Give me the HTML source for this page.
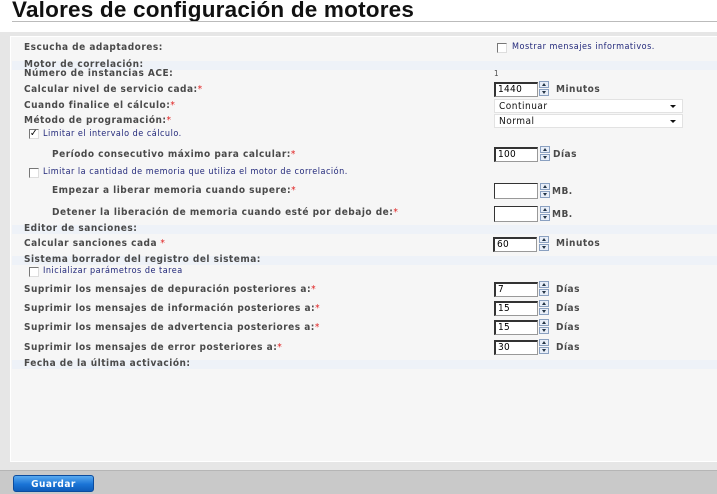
<!DOCTYPE html>
<html><head><meta charset="utf-8"><style>
*{margin:0;padding:0;box-sizing:border-box}
body{width:717px;height:494px;background:#fff;position:relative;overflow:hidden;font-family:Tahoma,"DejaVu Sans Condensed","Liberation Sans",sans-serif;font-size:10px;color:#4a4a4a;letter-spacing:0.5px}
.a{position:absolute;white-space:nowrap}
h1{position:absolute;left:12px;top:-3px;font:bold 22.5px "Liberation Sans",Arial,sans-serif;color:#111;letter-spacing:0.2px;white-space:nowrap}
.rule{position:absolute;left:12px;top:21px;width:705px;height:1px;background:#bbb}
.outer{position:absolute;left:0;top:32px;width:717px;height:440px;background:#e6e6e6}
.inner{position:absolute;left:10px;top:36px;width:707px;height:426px;background:#f6f6f6;border:1px solid #fff;border-right:none}
.foot{position:absolute;left:0;top:470px;width:717px;height:24px;background:#c9c9c9;border-top:1px solid #b5b5b5}
.btn{position:absolute;left:13px;top:475px;width:81px;height:17px;border-radius:3px;background:linear-gradient(#5aaaf0,#1a74d6 55%,#0e5cba);color:#fff;font-weight:bold;font-size:10px;text-align:center;line-height:17px;border:1px solid #0b4c9e}
b{font-weight:bold}
.r{color:#e02020}
.band{position:absolute;left:12px;width:705px;height:9px;background:#eef2f8}
.in{position:absolute;width:44px;height:15px;background:#fff;border:1px solid #999;border-top:2px solid #333;border-left:2px solid #333;font-size:10px;color:#000;padding-left:2px;line-height:12px;letter-spacing:0.3px}
.sp{position:absolute;width:10px;height:16px}
.sp i{display:block;width:10px;height:7px;border:1px solid #8aa0c0;background:#e8eef8;margin-bottom:1px;position:relative}
.sp i:after{content:"";position:absolute;left:2px;top:1px;border-left:2px solid transparent;border-right:2px solid transparent}
.sp i.u:after{border-bottom:3px solid #234}
.sp i.d:after{border-top:3px solid #234}
.sel{position:absolute;left:494px;width:189px;height:14px;background:#fff;border:1px solid #e2e2e2;font-size:10px;color:#111;padding-left:4px;line-height:13px}
.sel:after{content:"";position:absolute;right:6px;top:5px;border-left:3px solid transparent;border-right:3px solid transparent;border-top:3px solid #111}
.cb{position:absolute;width:10px;height:10px;border:1px solid #777;border-right-color:#ddd;border-bottom-color:#ddd;background:#fff}
.cl{color:#22287a;font-size:9px}
</style></head><body>
<h1>Valores de configuración de motores</h1>
<div class="rule"></div>
<div class="outer"></div>
<div class="inner"></div>
<div class="band" style="top:61px"></div>
<div class="band" style="top:225px"></div>
<div class="band" style="top:256px"></div>
<div class="band" style="top:360px"></div>

<div class="a" style="left:24px;top:42px"><b>Escucha de adaptadores:</b></div>
<div class="cb" style="left:497px;top:43px"></div>
<div class="a cl" style="left:512px;top:42px">Mostrar mensajes informativos.</div>

<div class="a" style="left:24px;top:59px"><b>Motor de correlación:</b></div>
<div class="a" style="left:24px;top:68px"><b>Número de instancias ACE:</b></div>
<div class="a" style="left:494px;top:69px;font-size:8px">1</div>

<div class="a" style="left:24px;top:84px"><b>Calcular nivel de servicio cada:</b><span class="r">*</span></div>
<div class="in" style="left:494px;top:82px">1440</div>
<div class="sp" style="left:539px;top:81px"><i class="u"></i><i class="d"></i></div>
<div class="a" style="left:556px;top:84px"><b>Minutos</b></div>

<div class="a" style="left:24px;top:100px"><b>Cuando finalice el cálculo:</b><span class="r">*</span></div>
<div class="sel" style="top:99px">Continuar</div>
<div class="a" style="left:24px;top:115px"><b>Método de programación:</b><span class="r">*</span></div>
<div class="sel" style="top:114px">Normal</div>

<div class="cb" style="left:29px;top:129px;font-size:10px;line-height:8px;color:#000;letter-spacing:0">✓</div>
<div class="a cl" style="left:43px;top:129px">Limitar el intervalo de cálculo.</div>

<div class="a" style="left:52px;top:149px"><b>Período consecutivo máximo para calcular:</b><span class="r">*</span></div>
<div class="in" style="left:494px;top:147px">100</div>
<div class="sp" style="left:540px;top:146px"><i class="u"></i><i class="d"></i></div>
<div class="a" style="left:553px;top:149px"><b>Días</b></div>

<div class="cb" style="left:29px;top:168px"></div>
<div class="a cl" style="left:43px;top:167px">Limitar la cantidad de memoria que utiliza el motor de correlación.</div>

<div class="a" style="left:52px;top:185px"><b>Empezar a liberar memoria cuando supere:</b><span class="r">*</span></div>
<div class="in" style="left:494px;top:183px;border-top-width:1px;border-left-width:1px;height:16px"></div>
<div class="sp" style="left:540px;top:183px"><i class="u"></i><i class="d"></i></div>
<div class="a" style="left:552px;top:186px"><b>MB.</b></div>

<div class="a" style="left:52px;top:207px"><b>Detener la liberación de memoria cuando esté por debajo de:</b><span class="r">*</span></div>
<div class="in" style="left:494px;top:206px;border-top-width:1px;border-left-width:1px;height:16px"></div>
<div class="sp" style="left:540px;top:206px"><i class="u"></i><i class="d"></i></div>
<div class="a" style="left:552px;top:209px"><b>MB.</b></div>

<div class="a" style="left:24px;top:223px"><b>Editor de sanciones:</b></div>
<div class="a" style="left:24px;top:238px"><b>Calcular sanciones cada</b> <span class="r">*</span></div>
<div class="in" style="left:493px;top:237px">60</div>
<div class="sp" style="left:539px;top:236px"><i class="u"></i><i class="d"></i></div>
<div class="a" style="left:556px;top:238px"><b>Minutos</b></div>

<div class="a" style="left:24px;top:254px"><b>Sistema borrador del registro del sistema:</b></div>
<div class="cb" style="left:29px;top:267px"></div>
<div class="a cl" style="left:43px;top:266px">Inicializar parámetros de tarea</div>

<div class="a" style="left:24px;top:284px"><b>Suprimir los mensajes de depuración posteriores a:</b><span class="r">*</span></div>
<div class="in" style="left:494px;top:282px">7</div>
<div class="sp" style="left:539px;top:281px"><i class="u"></i><i class="d"></i></div>
<div class="a" style="left:556px;top:284px"><b>Días</b></div>

<div class="a" style="left:24px;top:303px"><b>Suprimir los mensajes de información posteriores a:</b><span class="r">*</span></div>
<div class="in" style="left:494px;top:301px">15</div>
<div class="sp" style="left:539px;top:300px"><i class="u"></i><i class="d"></i></div>
<div class="a" style="left:556px;top:303px"><b>Días</b></div>

<div class="a" style="left:24px;top:322px"><b>Suprimir los mensajes de advertencia posteriores a:</b><span class="r">*</span></div>
<div class="in" style="left:494px;top:320px">15</div>
<div class="sp" style="left:539px;top:319px"><i class="u"></i><i class="d"></i></div>
<div class="a" style="left:556px;top:322px"><b>Días</b></div>

<div class="a" style="left:24px;top:342px"><b>Suprimir los mensajes de error posteriores a:</b><span class="r">*</span></div>
<div class="in" style="left:494px;top:340px">30</div>
<div class="sp" style="left:539px;top:339px"><i class="u"></i><i class="d"></i></div>
<div class="a" style="left:556px;top:342px"><b>Días</b></div>

<div class="a" style="left:24px;top:358px"><b>Fecha de la última activación:</b></div>

<div class="foot"></div>
<div class="btn">Guardar</div>
</body></html>
